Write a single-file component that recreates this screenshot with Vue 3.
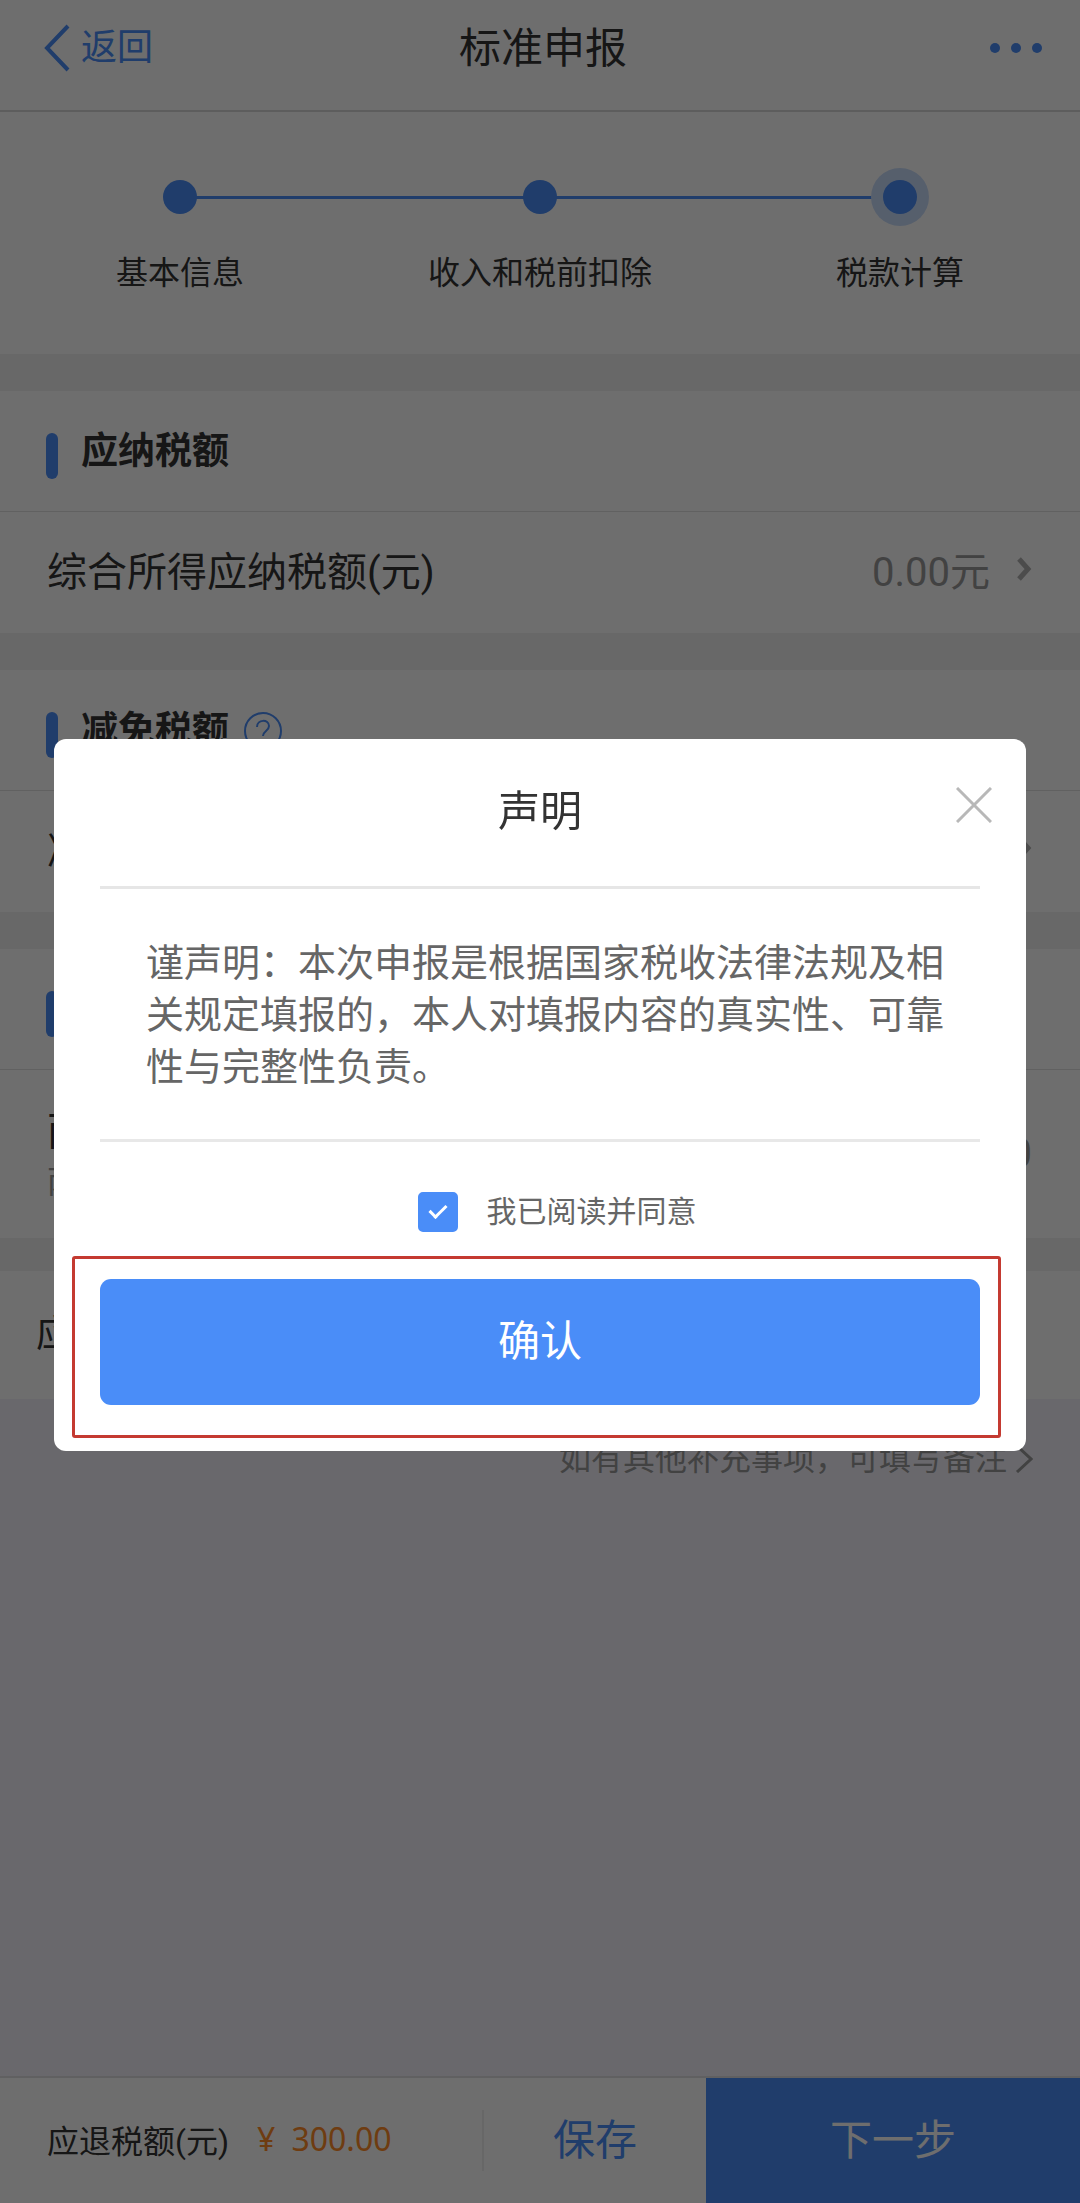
<script setup>
import { ref } from 'vue'

const steps = [
  { label: '基本信息', current: false },
  { label: '收入和税前扣除', current: false },
  { label: '税款计算', current: true }
]

const showDialog = ref(true)
const agreed = ref(true)

const closeDialog = () => {
  showDialog.value = false
}

const handleConfirm = () => {
  if (agreed.value) closeDialog()
}
</script>

<template>
  <div class="page">
    <header class="nav">
      <button class="nav-back" type="button">
        <svg width="26" height="48" viewBox="0 0 26 48" fill="none" stroke="currentColor" stroke-width="4" aria-hidden="true">
          <path d="M24 2 3 24l21 22" />
        </svg>
        <span>返回</span>
      </button>
      <h1 class="nav-title">标准申报</h1>
      <button class="nav-more" type="button" aria-label="更多">
        <i></i><i></i><i></i>
      </button>
    </header>

    <main class="content">
      <ol class="steps">
        <li v-for="step in steps" :key="step.label" class="step" :class="{ current: step.current }">
          <span class="step-dot"></span>
          <span class="step-label">{{ step.label }}</span>
        </li>
      </ol>

      <section class="card">
        <h2 class="card-title"><span>应纳税额</span></h2>
        <a class="row" href="#">
          <span>综合所得应纳税额(元)</span>
          <span class="value">0.00元</span>
          <svg class="arrow" width="16" height="24" viewBox="0 0 16 24" fill="none" stroke="currentColor" stroke-width="5" aria-hidden="true">
            <path d="M3 2l9 10-9 10" />
          </svg>
        </a>
      </section>

      <section class="card">
        <h2 class="card-title">
          <span>减免税额</span>
          <svg class="help" width="38" height="38" viewBox="0 0 38 38" fill="none" stroke="currentColor" stroke-width="2" aria-hidden="true">
            <circle cx="19" cy="19" r="18" />
            <path d="M13 15c0-8 12-8 12-1 0 5-6 5-6 10" />
            <path d="M19 27v3" />
          </svg>
        </h2>
        <a class="row" href="#">
          <span>减免税额(元)</span>
          <span class="value">0.00元</span>
          <svg class="arrow" width="16" height="24" viewBox="0 0 16 24" fill="none" stroke="currentColor" stroke-width="5" aria-hidden="true">
            <path d="M3 2l9 10-9 10" />
          </svg>
        </a>
      </section>

      <section class="card">
        <h2 class="card-title"><span>已缴税额</span></h2>
        <div class="row row-tall">
          <div>
            <p>两处合计已缴税额(元)</p>
            <p class="sub">两处合计</p>
          </div>
          <span class="value">300.00</span>
        </div>
      </section>

      <section class="card total">
        <span>应退税额(元)</span>
      </section>

      <a class="remark" href="#">
        如有其他补充事项，可填写备注
        <svg width="18" height="28" viewBox="0 0 18 28" fill="none" stroke="currentColor" stroke-width="3" aria-hidden="true">
          <path d="M2 1l14 13L2 27" />
        </svg>
      </a>
    </main>

    <footer class="bottom-bar">
      <div class="refund">
        <span>应退税额(元)</span>
        <span class="amount">¥&ensp;300.00</span>
      </div>
      <button class="btn-save" type="button">保存</button>
      <button class="btn-next" type="button">下一步</button>
    </footer>

    <div v-if="showDialog" class="mask">
      <div class="dialog" role="dialog" aria-modal="true" aria-labelledby="dialog-title">
        <div class="dialog-header">
          <h2 id="dialog-title">声明</h2>
          <button class="btn-close" type="button" aria-label="关闭" @click="closeDialog">
            <svg width="36" height="36" viewBox="0 0 36 36" fill="none" stroke="currentColor" stroke-width="3" aria-hidden="true">
              <path d="M1 1l34 34M35 1L1 35" />
            </svg>
          </button>
        </div>
        <p class="dialog-text">谨声明：本次申报是根据国家税收法律法规及相关规定填报的，本人对填报内容的真实性、可靠性与完整性负责。</p>
        <label class="agree">
          <input v-model="agreed" type="checkbox">
          <span>我已阅读并同意</span>
        </label>
        <div class="confirm">
          <button class="btn-confirm" type="button" @click="handleConfirm">确认</button>
        </div>
      </div>
    </div>
  </div>
</template>

<style>
body { margin: 0; background: #f3f2fa; }
</style>

<style scoped>
.page {
  min-height: 100vh; display: flex; flex-direction: column; background: #f3f2fa; color: #333;
  font-family: Roboto, 'Noto Sans CJK SC', sans-serif; font-size: 32px;
}
h1, h2, p, ol { margin: 0; padding: 0; font-weight: normal; }
a { color: inherit; text-decoration: none; }
svg { display: block; flex: none; }
button { border: none; padding: 0; background: none; font: inherit; color: inherit; cursor: pointer; }

.nav {
  display: grid; grid-template-columns: 1fr auto 1fr; align-items: center; height: 96px; padding: 0 38px 14px 44px;
  background: #fff; border-bottom: 2px solid #d8d8d8;
}
.nav-back { justify-self: start; display: flex; align-items: center; gap: 11px; color: #4a8df8; font-size: 36px; }
.nav-back span, .nav-title { padding-bottom: 8px; }
.nav-title { font-size: 42px; }
.nav-more { justify-self: end; display: flex; gap: 11px; color: #4a8df8; }
.nav-more i { width: 10px; height: 10px; border-radius: 50%; background: currentColor; }

.content { flex: 1; }
.steps {
  display: grid; grid-template-columns: repeat(3, 1fr); height: 186px; padding-top: 56px; list-style: none; background: #fff;
}
.step { position: relative; display: flex; flex-direction: column; align-items: center; gap: 23px; }
.step + .step::before {
  content: ''; position: absolute; top: 28px; right: 50%; width: 100%; height: 3px; background: #4a8df8;
}
.step-dot { position: relative; z-index: 1; width: 34px; height: 34px; margin: 12px; border-radius: 50%; background: #4a8df8; }
.current .step-dot { box-shadow: 0 0 0 12px #c8dcfb; }
.step:not(.current) { z-index: 1; }
.step-label { line-height: 48px; }

.card { background: #fff; border-top: 37px solid #f2f2f2; }
.card-title {
  display: flex; align-items: flex-start; padding: 42px 46px 32px; border-bottom: 1px solid #e2e2e2;
  font-size: 37px; font-weight: bold; line-height: 38px;
}
.card-title::before { content: ''; width: 12px; height: 46px; margin-right: 23px; border-radius: 6px; background: #4a8df8; }
.help { margin-left: 15px; color: #4a8df8; }
.row { display: flex; align-items: center; height: 121px; padding: 0 48px 0 47px; font-size: 40px; line-height: 56px; }
.value { margin-left: auto; color: #999; }
.arrow { margin: 0 0 8px 26px; color: #b0b0b0; }
.row-tall { height: 168px; }
.sub { color: #999; font-size: 32px; line-height: 44px; }
.total { border-top-width: 33px; padding: 36px; font-size: 37px; line-height: 56px; }
.remark {
  display: flex; align-items: center; justify-content: flex-end; gap: 8px; padding: 36px 47px; color: #999; line-height: 48px;
}

.bottom-bar { display: flex; height: 125px; background: #fff; border-top: 2px solid #dedee2; }
.refund {
  flex: 1; display: flex; align-items: center; gap: 28px; margin: 32px 0; padding: 0 0 4px 47px; border-right: 2px solid #eee;
}
.amount { color: #ff8c28; font-family: 'Noto Sans', sans-serif; }
.btn-save, .btn-next, .btn-confirm { padding-bottom: 8px; font-size: 42px; }
.btn-save { width: 222px; color: #4a8df8; }
.btn-next { width: 374px; background: #4a8df8; color: #fff; }

.mask {
  position: fixed; inset: 0; z-index: 10; display: flex; align-items: center; justify-content: center;
  padding: 0 54px 14px; background: rgba(0, 0, 0, 0.57);
}
.dialog { flex: 1; padding: 0 46px 46px; border-radius: 12px; background: #fff; }
.dialog-header {
  position: relative; padding: 45px 0 46px; border-bottom: 3px solid #e6e6e6; text-align: center;
}
.dialog-header h2 { font-size: 42px; line-height: 56px; }
.btn-close { position: absolute; top: 48px; right: -12px; color: #b8b8b8; }
.dialog-text {
  padding: 48px 34px 46px 46px; border-bottom: 3px solid #e8e8e8; color: #666; font-size: 38px; line-height: 52px;
}
.agree {
  display: flex; align-items: center; justify-content: center; gap: 29px; margin: 50px 0 47px; padding-left: 34px;
  color: #666; font-size: 30px; line-height: 40px; cursor: pointer;
}
.agree input {
  appearance: none; position: relative; width: 40px; height: 40px; margin: 0; border: 2px solid #4a8df8; border-radius: 5px; background: #fff;
}
.agree input:checked { background: #4a8df8; }
.agree input:checked::after {
  content: ''; position: absolute; top: 7px; left: 13px; width: 7px; height: 14px;
  border: solid #fff; border-width: 0 3px 3px 0; transform: rotate(45deg);
}
.confirm { position: relative; }
/* 红框强调确认按钮 */
.confirm::before {
  content: ''; position: absolute; inset: -23px -21px -33px -28px; border: 3px solid #c43a31; border-radius: 3px; pointer-events: none;
}
.btn-confirm { display: block; width: 100%; height: 126px; border-radius: 11px; background: #4a8df8; color: #fff; }
</style>
